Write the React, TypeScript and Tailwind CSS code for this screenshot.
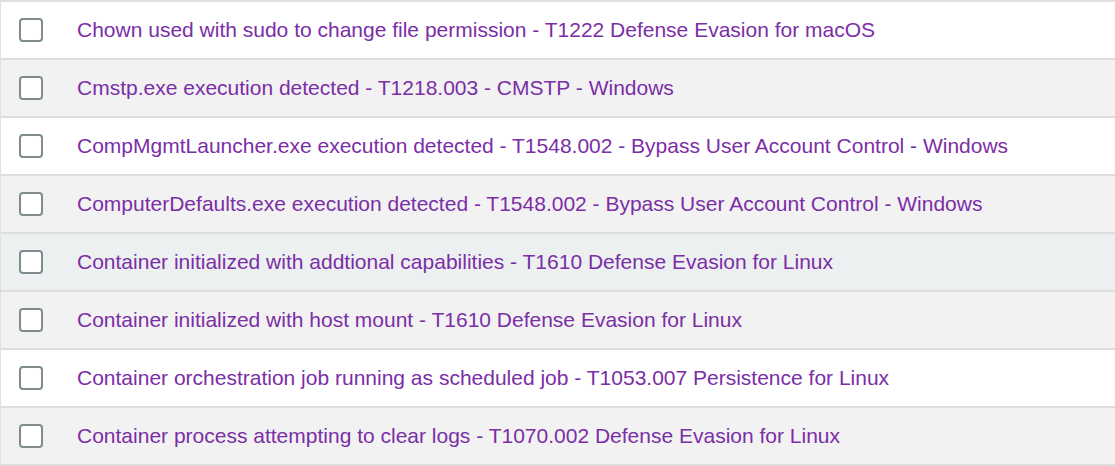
const RULES = [
  "Chown used with sudo to change file permission - T1222 Defense Evasion for macOS",
  "Cmstp.exe execution detected - T1218.003 - CMSTP - Windows",
  "CompMgmtLauncher.exe execution detected - T1548.002 - Bypass User Account Control - Windows",
  "ComputerDefaults.exe execution detected - T1548.002 - Bypass User Account Control - Windows",
  "Container initialized with addtional capabilities - T1610 Defense Evasion for Linux",
  "Container initialized with host mount - T1610 Defense Evasion for Linux",
  "Container orchestration job running as scheduled job - T1053.007 Persistence for Linux",
  "Container process attempting to clear logs - T1070.002 Defense Evasion for Linux",
];

/** Rule list with checkboxes */
export default function App() {
  return (
    <div
      className="w-[1115px] h-[466px] bg-white border-t-2 border-l border-[#e0e0e0]"
      style={{ fontFamily: '"Liberation Sans", Arial, sans-serif' }}
    >
      {RULES.map((rule, i) => {
        const hovered = i === 4;
        const bg = hovered ? "bg-[#ecf0f1]" : i % 2 === 1 ? "bg-[#f2f2f2]" : "bg-white";
        return (
          <div
            key={rule}
            className={`${bg} h-[58px] flex items-center border-b-2 border-[#dddddd]`}
          >
            <div className="w-[76px] flex items-center pl-[18px] shrink-0">
              <span className="block w-[24px] h-[24px] rounded-[4px] border-2 border-[#7f8c8d] bg-white" />
            </div>
            <a className="text-[21px] text-[#7b2ea6] leading-none cursor-pointer -mt-[1px]">{rule}</a>
          </div>
        );
      })}
    </div>
  );
}
